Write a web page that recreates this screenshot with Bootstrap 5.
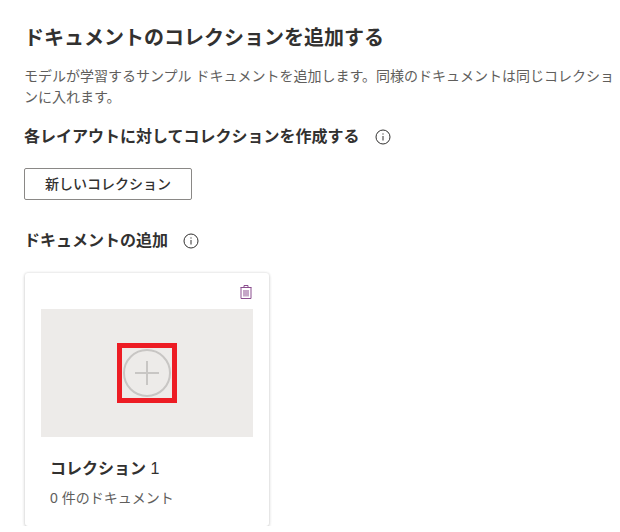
<!DOCTYPE html>
<html lang="ja">
<head>
    <meta charset="UTF-8">
    <title>ドキュメントのコレクションを追加する</title>
    <meta name="viewport" content="width=device-width, initial-scale=1">
    <link href="https://cdn.jsdelivr.net/npm/bootstrap@5.3.2/dist/css/bootstrap.min.css" rel="stylesheet">
    <style>
        body {
            font-family: "Liberation Sans", "Noto Sans CJK JP", sans-serif;
            color: #323130;
            background: #fff;
            overflow: hidden;
        }
        .page-wrap { padding: 23px 0 0 24px; }
        .page-title { font-size: 20px; font-weight: 700; line-height: 30px; margin: 0 0 13px; }
        .page-desc { font-size: 14px; line-height: 21px; color: #605e5c; margin: 0 0 17px; }
        .sect-title { font-size: 16px; font-weight: 700; line-height: 24px; margin: 0; }
        .sect-row { gap: 15px; }
        .info-ico { width: 16px; height: 16px; flex: none; }
        .sect-first { margin-bottom: 19px; }
        .sect-gap { margin: 29px 0 20px; }
        .btn-new {
            width: 168px; height: 32px; padding: 0;
            font-size: 14px; font-weight: 500; color: #323130;
            border: 1px solid #8a8886; border-radius: 2px; background: #fff;
        }
        .coll-card {
            width: 244px; height: 253px; margin-left: 1px;
            border: 0; border-radius: 3px;
            box-shadow: 0 1.6px 3.6px rgba(0,0,0,.16), 0 0 2.9px rgba(0,0,0,.12);
            padding: 11px 16px 0;
        }
        .trash-row { height: 25px; }
        .drop-area { height: 128px; background: #edebe9; }
        .red-box { width: 60px; height: 60px; border: 5px solid #ed1c24; }
        .coll-name { font-size: 16px; font-weight: 700; line-height: 24px; margin: 20px 0 0 9px; }
        .coll-name span { font-weight: 400; }
        .coll-count { font-size: 14px; line-height: 21px; color: #605e5c; margin: 7px 0 0 9px; }
    </style>
</head>
<body>
    <div class="page-wrap">
        <h1 class="page-title">ドキュメントのコレクションを追加する</h1>
        <p class="page-desc">モデルが学習するサンプル ドキュメントを追加します。同様のドキュメントは同じコレクションに入れます。</p>
        <div class="d-flex align-items-center sect-row sect-first">
            <h2 class="sect-title">各レイアウトに対してコレクションを作成する</h2>
            <svg class="info-ico" viewBox="0 0 16 16" fill="none" stroke="#323130"><circle cx="8" cy="8" r="7"/><path d="M8 7v4.5M8 4.4v1.2"/></svg>
        </div>
        <button type="button" class="btn btn-new d-block">新しいコレクション</button>
        <div class="d-flex align-items-center sect-row sect-gap">
            <h2 class="sect-title">ドキュメントの追加</h2>
            <svg class="info-ico" viewBox="0 0 16 16" fill="none" stroke="#323130"><circle cx="8" cy="8" r="7"/><path d="M8 7v4.5M8 4.4v1.2"/></svg>
        </div>
        <div class="card coll-card">
            <div class="trash-row d-flex justify-content-end">
                <svg width="14" height="16" viewBox="0 0 14 16" fill="none" stroke="#8b4f8f"><path d="M1.5 3.5h11M2 3.5v11h10v-11M5 3.5V1.5h4v2M5 6v6.5M7 6v6.5M9 6v6.5"/></svg>
            </div>
            <div class="drop-area d-flex align-items-center justify-content-center">
                <div class="red-box d-flex align-items-center justify-content-center">
                    <svg width="50" height="50" viewBox="0 0 50 50" fill="none" stroke="#c8c6c4" stroke-width="2"><circle cx="25" cy="25" r="23"/><path d="M13 25h24M25 13v24"/></svg>
                </div>
            </div>
            <div class="coll-name">コレクション <span>1</span></div>
            <div class="coll-count">0 件のドキュメント</div>
        </div>
    </div>
</body>
</html>
